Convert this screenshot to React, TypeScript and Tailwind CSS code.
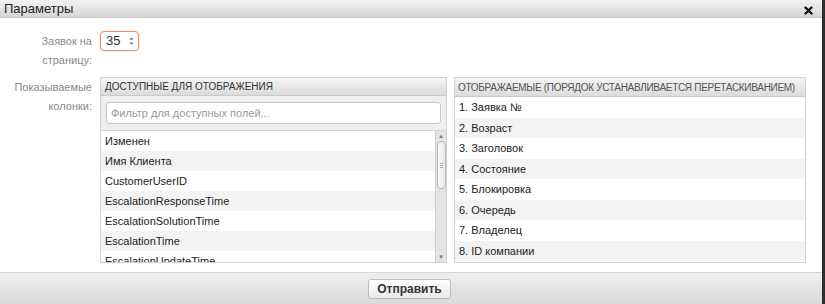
import React from "react";

const available = [
  "Изменен",
  "Имя Клиента",
  "CustomerUserID",
  "EscalationResponseTime",
  "EscalationSolutionTime",
  "EscalationTime",
  "EscalationUpdateTime",
];

const shown = [
  "1. Заявка №",
  "2. Возраст",
  "3. Заголовок",
  "4. Состояние",
  "5. Блокировка",
  "6. Очередь",
  "7. Владелец",
  "8. ID компании",
];

export default function App() {
  return (
    <div
      className="w-[825px] h-[304px] flex flex-col bg-white overflow-hidden border-r-[3px] border-[#2e2e2e]"
      style={{ fontFamily: '"Liberation Sans", Arial, sans-serif' }}
    >
      {/* Title bar */}
      <div className="h-[18px] shrink-0 flex items-center justify-between pl-[4px] pr-[9px] bg-gradient-to-b from-[#f2f2f2] to-[#d6d6d6] border-b border-[#c8c8c8]">
        <span className="text-[13px] text-[#222] leading-none">Параметры</span>
        <svg width="9" height="9" viewBox="0 0 9 9" className="mt-[4px]">
          <path d="M1.5 1.5 L7.5 7.5 M7.5 1.5 L1.5 7.5" stroke="#111" strokeWidth="2.4" strokeLinecap="round" />
        </svg>
      </div>

      {/* Body */}
      <div className="flex-1 pt-[13px] pl-[8px] pr-[16px]">
        <div className="grid grid-cols-[84px_1fr] gap-x-[8px]">
          <div className="text-right text-[11px] leading-[19px] text-[#8a8a8a] pt-[1px]">
            Заявок на
            <br />
            страницу:
          </div>
          <div>
            <div className="w-[39px] h-[20px] rounded-[4px] border border-[#e0906a] flex items-center justify-between pl-[5px] pr-[4px] shadow-[0_0_2px_#f3c3a8]">
              <span className="text-[13px] text-[#333]">35</span>
              <svg width="5" height="10" viewBox="0 0 5 10">
                <path d="M0.5 3.5 L2.5 1.5 L4.5 3.5 Z M0.5 6.5 L2.5 8.5 L4.5 6.5 Z" fill="#555" />
              </svg>
            </div>
          </div>

          <div className="text-right text-[11px] leading-[19px] text-[#8a8a8a] mt-[8px]">
            Показываемые
            <br />
            колонки:
          </div>
          <div className="mt-[7px] flex gap-[7px]">
            {/* Available */}
            <div className="w-[347px] h-[186px] border border-[#d2d2d2] flex flex-col overflow-hidden">
              <div className="h-[18px] shrink-0 flex items-center px-[4px] bg-gradient-to-b from-[#f4f4f4] to-[#dcdcdc] border-b border-[#c9c9c9] text-[10px] text-[#333] whitespace-nowrap">
                ДОСТУПНЫЕ ДЛЯ ОТОБРАЖЕНИЯ
              </div>
              <div className="bg-[#eeeeee] px-[5px] py-[6px] shrink-0">
                <div className="h-[22px] bg-white border border-[#c8c8c8] rounded-[3px] flex items-center px-[4px] text-[11px] text-[#9a9a9a]">
                  Фильтр для доступных полей...
                </div>
              </div>
              <div className="flex flex-1 overflow-hidden bg-white border-t border-[#d8d8d8]">
                <div className="flex-1 overflow-hidden">
                  {available.map((a, i) => (
                    <div
                      key={a}
                      className={`h-[20px] flex items-center pl-[4px] text-[11px] text-[#222] ${i % 2 ? "bg-[#f3f3f3]" : "bg-white"}`}
                    >
                      {a}
                    </div>
                  ))}
                </div>
                <div className="w-[11px] bg-[#e4e4e4] border-l border-[#cfcfcf] flex flex-col items-center">
                  <div className="h-[10px] text-[6px] text-[#777] leading-[10px]">▲</div>
                  <div className="w-[9px] h-[48px] rounded-[4px] bg-gradient-to-r from-[#fafafa] to-[#e8e8e8] border border-[#b8b8b8] flex flex-col items-center justify-center gap-[1px]">
                    <div className="w-[3px] h-px bg-[#aaa]" />
                    <div className="w-[3px] h-px bg-[#aaa]" />
                    <div className="w-[3px] h-px bg-[#aaa]" />
                  </div>
                  <div className="flex-1" />
                  <div className="h-[10px] text-[6px] text-[#777] leading-[10px]">▼</div>
                </div>
              </div>
            </div>

            {/* Shown */}
            <div className="w-[352px] h-[186px] border border-[#d2d2d2] flex flex-col overflow-hidden">
              <div className="h-[19px] shrink-0 flex items-center px-[3px] bg-gradient-to-b from-[#f4f4f4] to-[#dcdcdc] border-b border-[#c9c9c9] text-[10px] tracking-[-0.3px] text-[#555] whitespace-nowrap overflow-hidden">
                ОТОБРАЖАЕМЫЕ (ПОРЯДОК УСТАНАВЛИВАЕТСЯ ПЕРЕТАСКИВАНИЕМ)
              </div>
              <div className="flex-1 bg-white">
                {shown.map((s, i) => (
                  <div
                    key={s}
                    className={`h-[20.5px] flex items-center pl-[4px] text-[11px] text-[#222] ${i % 2 ? "bg-[#f3f3f3]" : "bg-white"}`}
                  >
                    {s}
                  </div>
                ))}
              </div>
            </div>
          </div>
        </div>
      </div>

      {/* Footer */}
      <div className="h-[32px] shrink-0 border-t border-[#d4d4d4] bg-gradient-to-b from-[#efefef] to-[#d9d9d9] flex items-center justify-center">
        <button className="h-[20px] px-[8px] ml-[-3px] mt-[1px] rounded-[3px] border border-[#bdbdbd] bg-gradient-to-b from-[#ffffff] to-[#e8e8e8] text-[12px] font-bold text-[#333] leading-none">
          Отправить
        </button>
      </div>
    </div>
  );
}
